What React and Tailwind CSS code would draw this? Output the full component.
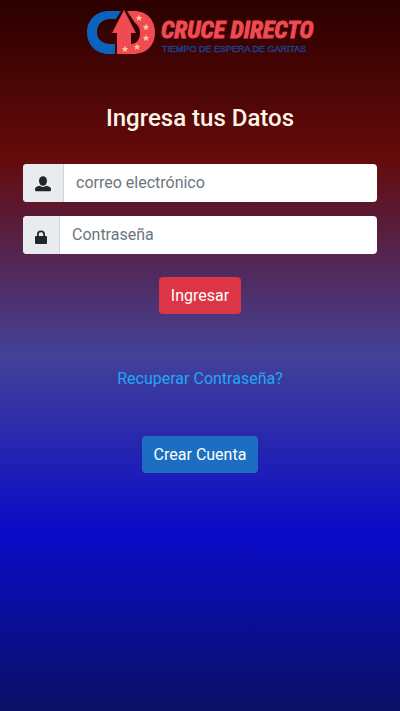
import React from "react";

function Star({ x, y }) {
  return (
    <path
      transform={`translate(${x} ${y})`}
      fill="#ffc796"
      d="M0-3.4 1-1.1 3.4-1 1.5.6 2.1 3 0 1.7-2.1 3-1.5.6-3.4-1-1-1.1Z"
    />
  );
}

function Logo() {
  return (
    <svg viewBox="0 0 230 46" className="h-[46px] w-[230px]" role="img" aria-label="Cruce Directo">
      <path fill="#0b63bd" d="M36 1H24C10 1 2 11 2 22.500S10 44 24 44h6V34h-4C18 34 12 30 12 22S18 9 25 9h6Z" />
      <path fill="#f04a52" d="M39 0 51 23h-5v21H32V23h-5Z" />
      <path fill="#f04a52" d="M42 1h7C62 1 70 10 70 22.500S62 44 48 44H40V34h6c5 0 9-4 9-11 0-5-2-8-5-10Z" />
      <Star x={54} y={8} />
      <Star x={61} y={17} />
      <Star x={61} y={28} />
      <Star x={52} y={37} />
      <Star x={40} y={39} />
      <text x="76" y="28" fill="#f04a52" stroke="#f04a52" strokeWidth="1" className="font-['Roboto_Condensed',Roboto,sans-serif] text-[24px] font-bold italic">
        CRUCE DIRECTO
      </text>
      <text x="77" y="42" fill="#1c418f" stroke="#1c418f" strokeWidth="0.4" className="font-['Liberation_Sans',sans-serif] text-[9px]">
        TIEMPO DE ESPERA DE GARITAS
      </text>
    </svg>
  );
}

function Field({ id, label, type, icon }) {
  return (
    <div className="flex h-[38px] overflow-hidden rounded bg-white">
      <label htmlFor={id} aria-label={label} className="flex items-center border-r border-[#ced4da] bg-[#e9ecef] px-3 pt-0.5 text-[#212529]">
        {icon}
      </label>
      <input
        id={id}
        type={type}
        placeholder={label}
        className="min-w-0 flex-1 px-3 text-base text-[#495057] outline-none placeholder:text-[#6c757d]"
      />
    </div>
  );
}

const userIcon = (
  <svg viewBox="0 0 16 16" className="size-4" fill="currentColor" aria-hidden="true">
    <ellipse cx="8" cy="5" rx="4" ry="4.800" />
    <path d="M0 14v-1C0 11.200 2 10.400 4.500 9.800 6.500 11.300 9.500 11.300 11.500 9.800 14 10.400 16 11.200 16 13v1q0 1.200-1.200 1.200H1.200Q0 15.200 0 14Z" />
  </svg>
);

const lockIcon = (
  <svg viewBox="0 0 12 16" className="h-4 w-3" fill="currentColor" aria-hidden="true">
    <path fillRule="evenodd" d="M2 8V6.500a4 4 0 0 1 8 0V8h1q1 0 1 1v6q0 1-1 1H1q-1 0-1-1V9q0-1 1-1Zm1.700 0h4.600V6.500a2.300 2.300 0 0 0-4.600 0Z" />
  </svg>
);

export default function App() {
  return (
    <main className="min-h-screen bg-[linear-gradient(180deg,#2c0000_0%,#650a0a_22%,#434197_50%,#0b0bc8_75%,#0a1064_100%)] px-[23px] pt-[10px] font-[Roboto,sans-serif] text-base">
      <header className="flex justify-center">
        <Logo />
      </header>
      <form className="flex flex-col items-center" onSubmit={(e) => e.preventDefault()}>
        <h1 className="mt-12 text-2xl leading-7 font-medium text-[#fff5e6]">Ingresa tus Datos</h1>
        <div className="mt-8 flex w-full flex-col gap-[14px]">
          <Field id="email" label="correo electrónico" type="email" icon={userIcon} />
          <Field id="password" label="Contraseña" type="password" icon={lockIcon} />
        </div>
        <button type="submit" className="mt-[23px] h-[37px] rounded bg-[#dc3545] px-3 text-white">
          Ingresar
        </button>
        <a href="#recuperar" className="mt-[53px] leading-6 text-[#1fa8f4]">Recuperar Contraseña?</a>
        <button type="button" className="mt-[45px] h-[37px] rounded bg-[#1b6ec2] px-3 text-white">
          Crear Cuenta
        </button>
      </form>
    </main>
  );
}
